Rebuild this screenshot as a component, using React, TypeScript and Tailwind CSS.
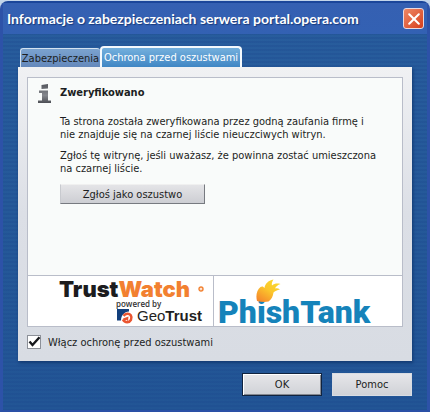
import { useState } from "react";

function CloseIcon() {
  return (
    <svg viewBox="0 0 12 12" className="h-3 w-3" fill="none" stroke="#fff" strokeWidth="2" strokeLinecap="round" aria-hidden="true">
      <path d="M1.2 1.2 10.8 10.8M10.8 1.2 1.2 10.8" />
    </svg>
  );
}

function InfoIcon() {
  return (
    <svg viewBox="0 0 14 20" className="h-5 w-[14px]" aria-hidden="true">
      <defs>
        <linearGradient id="info" x1="0" y1="0" x2="0" y2="1">
          <stop offset="0" stopColor="#55575d" />
          <stop offset="0.6" stopColor="#85878d" />
          <stop offset="1" stopColor="#4c4e54" />
        </linearGradient>
      </defs>
      <path fill="url(#info)" d="M3.500 1 10 0v4.500L3.500 5zM1 6.500h9v10h3V19H0v-2.500h4V9H1z" />
    </svg>
  );
}

function TrustWatchLogo() {
  return (
    <div className="flex flex-col pl-[31px] pt-[3px]">
      <div className="flex items-center font-[Inter,sans-serif] text-[22px] leading-5 font-black text-[#1c1c1e]">
        Trust<span className="text-[#f28030]">Watch</span>
        <svg viewBox="0 0 6 6" className="ml-[8px] h-[6px] w-[6px]" aria-hidden="true">
          <circle cx="3" cy="3" r="2" fill="none" stroke="#f28030" strokeWidth="1.400" />
          <circle cx="3" cy="3" r="0.600" fill="#f28030" />
        </svg>
      </div>
      <div className="pl-[57px] font-['Open_Sans',sans-serif] text-[8px] leading-[9px] font-semibold text-[#333]">powered by</div>
      <div className="flex items-center gap-[3px] pl-[57px] font-['Liberation_Sans',sans-serif] text-[15px] leading-4 text-[#1f1f22]">
        <svg viewBox="0 0 18 16" className="h-4 w-[18px]" aria-hidden="true">
          <path fill="#123f7c" d="M1 1h12v2.500C8.500 4 5.200 7 5 12.500H1z" />
          <path fill="none" stroke="#ea5530" strokeWidth="2.600" d="M7.500 7.800C9.500 5.500 13 5 14.700 7.300c2 3-.2 6.700-3.500 6.900-2.200 0-3.500-1.200-4.200-2.700" />
          <path fill="#ea5530" d="M7 10.500 12.500 8.500 12 13.200 10.500 11.800 8 13.500z" />
        </svg>
        <span>Geo<b>Trust</b></span>
      </div>
    </div>
  );
}

function PhishTankLogo() {
  return (
    <div className="relative pl-1 pt-[22px]">
      <svg viewBox="0 0 25 24" className="absolute left-[42px] top-[3px] z-10 h-6 w-[25px]" aria-hidden="true">
        <defs>
          <linearGradient id="fish" x1="0.900" y1="0" x2="0.200" y2="1">
            <stop offset="0" stopColor="#f9dc2c" />
            <stop offset="0.500" stopColor="#fbc62c" />
            <stop offset="1" stopColor="#f5882c" />
          </linearGradient>
        </defs>
        <path fill="url(#fish)" d="M1 22C-.5 16 1 11 4.500 8 6 7 7.500 7.500 8.500 9 9 5 12 1.500 17.500 0.500 16 3 15.500 4.500 16 6.500 18.500 4.500 21 4 24.500 5 21.500 6 20 7.500 19 9.500 21 9 22.500 9.500 24 10.500 21 11 19 12 17.500 13.500 17 17.500 15.500 20.500 12.500 22.500 9 23.200 5 23 1 22z" />
      </svg>
      <div className="font-[Roboto,sans-serif] text-[32px] leading-7 font-black text-[#1583ba]">PhishTank</div>
    </div>
  );
}

const text = "font-['DejaVu_Sans_Condensed','DejaVu_Sans',sans-serif] text-[11px]";

export default function App() {
  const [enabled, setEnabled] = useState(true);
  return (
    <main className={`flex min-h-screen flex-col bg-[#c3d5ea] pt-px leading-[13px] text-[#1c1e22] ${text}`}>
      <section className="flex flex-1 flex-col rounded-t-lg border-x-3 border-t-2 border-b-2 border-x-[#2d52a8] border-t-[#1b469a] border-b-[#2a50a6] bg-[repeating-linear-gradient(transparent_0_2px,#1a458c40_2px_4px),linear-gradient(#285d9d,#225595)]">
        <header className="flex h-[31px] items-center justify-between bg-linear-to-b from-[#3560b2] to-[#3361b3] pr-[3px] pl-1">
          <h1 className="font-[Lato,sans-serif] text-[14px] leading-5 font-bold whitespace-nowrap text-white [text-shadow:1px_1px_1px_#173a7c]">
            Informacje o zabezpieczeniach serwera portal.opera.com
          </h1>
          <button type="button" aria-label="Zamknij" className="grid h-[21px] w-[21px] place-items-center rounded-[3px] border border-[#e8d9e0] bg-linear-to-br from-[#ed8764] to-[#d63c18]">
            <CloseIcon />
          </button>
        </header>

        <div className="px-[15px] pt-3">
          <div role="tablist" className="flex items-end pl-[2px]">
            <button type="button" role="tab" aria-selected="false" className="h-[19px] w-20 rounded-t-[3px] border-t border-l border-[#d4e2f0] bg-linear-to-b from-[#7ba3cf] to-[#6488bb] whitespace-nowrap">
              Zabezpieczenia
            </button>
            <button type="button" role="tab" aria-selected="true" className="h-[21px] w-[142px] rounded-t-[4px] border-2 border-b-0 border-[#f4f9fd] bg-linear-to-b from-[#74b0dd] to-[#3f86c4] whitespace-nowrap text-white">
              Ochrona przed oszustwami
            </button>
          </div>

          <div role="tabpanel" className="bg-linear-to-b from-[#f0f1f3] via-[#dcdfe6] to-[#d8dce3] px-[9px] pt-[10px] pb-3 shadow-[1px_2px_3px_#123a72]">
            <div className="border border-[#b9bdc9] bg-[#f9fbfa]">
              <div className="flex h-[197px] gap-2 pt-[6px] pl-[10px]">
                <InfoIcon />
                <div className="flex-1">
                  <h2 className="pt-px leading-4 font-bold">Zweryfikowano</h2>
                  <p className="pt-[14px]">
                    Ta strona została zweryfikowana przez godną zaufania firmę i<br />
                    nie znajduje się na czarnej liście nieuczciwych witryn.
                  </p>
                  <p className="pt-2">
                    Zgłoś tę witrynę, jeśli uważasz, że powinna zostać umieszczona<br />
                    na czarnej liście.
                  </p>
                  <button type="button" className="mt-[9px] h-5 w-[145px] border border-t-[#f0f0f0] border-r-[#777a80] border-b-[#777a80] border-l-[#c8cacf] bg-linear-to-b from-[#e4e4e7] to-[#cdced3]">
                    Zgłoś jako oszustwo
                  </button>
                </div>
              </div>
              <div className="flex h-[51px] border-t border-[#b9bdc9] bg-white">
                <div className="w-[186px] border-r border-[#b9bdc9]">
                  <TrustWatchLogo />
                </div>
                <PhishTankLogo />
              </div>
            </div>

            <label className="mt-2 flex items-center gap-[7px]">
              <span className="grid h-[14px] w-[14px]">
                <input type="checkbox" checked={enabled} onChange={(e) => setEnabled(e.target.checked)} className="peer col-start-1 row-start-1 h-[14px] w-[14px] appearance-none border border-[#8c9098] bg-white" />
                <svg viewBox="0 0 14 14" className="pointer-events-none invisible col-start-1 row-start-1 h-[14px] w-[14px] peer-checked:visible" fill="none" stroke="#17191c" strokeWidth="2.400" aria-hidden="true">
                  <path d="M2.500 6.500 5.500 10 12.500 2.200" />
                </svg>
              </span>
              Włącz ochronę przed oszustwami
            </label>
          </div>

          <footer className="flex justify-end gap-[10px] pt-3">
            <button type="button" className="h-[23px] w-20 border border-[#10233f] bg-linear-to-b from-[#e6e6e9] to-[#d0d2d7] shadow-[inset_1px_1px_0_#fff,inset_-1px_-1px_0_#85888f]">OK</button>
            <button type="button" className="h-[23px] w-20 border border-[#d9dce2] bg-linear-to-b from-[#e6e6e9] to-[#d0d2d7]">Pomoc</button>
          </footer>
        </div>
      </section>
    </main>
  );
}
